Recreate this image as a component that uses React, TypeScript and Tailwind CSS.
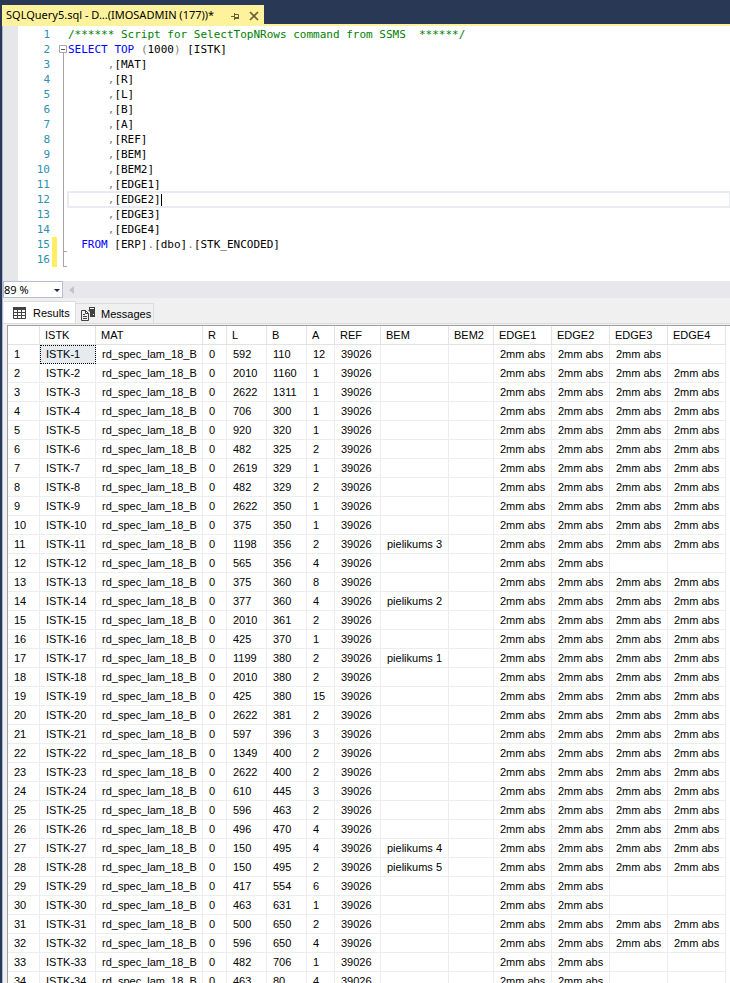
import { useState } from 'react'
import clsx from 'clsx'

type Token = { text: string; className?: string }

const keyword = 'text-[#0000ff]'
const punct = 'text-[#808080]'
const comment = 'text-[#008000]'

const column = (name: string): Token[] => [
  { text: '      ' },
  { text: ',', className: punct },
  { text: `[${name}]` },
]

const codeLines: Token[][] = [
  [{ text: '/****** Script for SelectTopNRows command from SSMS  ******/', className: comment }],
  [
    { text: 'SELECT', className: keyword },
    { text: ' ' },
    { text: 'TOP', className: keyword },
    { text: ' ' },
    { text: '(', className: punct },
    { text: '1000' },
    { text: ')', className: punct },
    { text: ' [ISTK]' },
  ],
  column('MAT'),
  column('R'),
  column('L'),
  column('B'),
  column('A'),
  column('REF'),
  column('BEM'),
  column('BEM2'),
  column('EDGE1'),
  column('EDGE2'),
  column('EDGE3'),
  column('EDGE4'),
  [
    { text: '  ' },
    { text: 'FROM', className: keyword },
    { text: ' [ERP]' },
    { text: '.', className: punct },
    { text: '[dbo]' },
    { text: '.', className: punct },
    { text: '[STK_ENCODED]' },
  ],
  [],
]

const CURRENT_LINE = 12

const columns = [
  { name: 'ISTK', width: 'w-[56px]' },
  { name: 'MAT', width: 'w-[107px]' },
  { name: 'R', width: 'w-[24px]' },
  { name: 'L', width: 'w-[40px]' },
  { name: 'B', width: 'w-[40px]' },
  { name: 'A', width: 'w-[28px]' },
  { name: 'REF', width: 'w-[46px]' },
  { name: 'BEM', width: 'w-[68px]' },
  { name: 'BEM2', width: 'w-[45px]' },
  { name: 'EDGE1', width: 'w-[58px]' },
  { name: 'EDGE2', width: 'w-[58px]' },
  { name: 'EDGE3', width: 'w-[58px]' },
  { name: 'EDGE4', width: 'w-[58px]' },
]

// L, B, A, number of edged sides, BEM
const parts: [number, number, number, number, string?][] = [
  [592, 110, 12, 3],
  [2010, 1160, 1, 4],
  [2622, 1311, 1, 4],
  [706, 300, 1, 4],
  [920, 320, 1, 4],
  [482, 325, 2, 4],
  [2619, 329, 1, 4],
  [482, 329, 2, 4],
  [2622, 350, 1, 4],
  [375, 350, 1, 4],
  [1198, 356, 2, 4, 'pielikums 3'],
  [565, 356, 4, 2],
  [375, 360, 8, 4],
  [377, 360, 4, 4, 'pielikums 2'],
  [2010, 361, 2, 4],
  [425, 370, 1, 4],
  [1199, 380, 2, 4, 'pielikums 1'],
  [2010, 380, 2, 4],
  [425, 380, 15, 4],
  [2622, 381, 2, 4],
  [597, 396, 3, 4],
  [1349, 400, 2, 4],
  [2622, 400, 2, 4],
  [610, 445, 3, 4],
  [596, 463, 2, 4],
  [496, 470, 4, 4],
  [150, 495, 4, 4, 'pielikums 4'],
  [150, 495, 2, 4, 'pielikums 5'],
  [417, 554, 6, 2],
  [463, 631, 1, 2],
  [500, 650, 2, 4],
  [596, 650, 4, 4],
  [482, 706, 1, 2],
  [463, 80, 4, 2],
]

const rows = parts.map(([l, b, a, edges, bem], i) => [
  `ISTK-${i + 1}`,
  'rd_spec_lam_18_B',
  '0',
  String(l),
  String(b),
  String(a),
  '39026',
  bem ?? '',
  '',
  ...[1, 2, 3, 4].map((n) => (n <= edges ? '2mm abs' : '')),
])

function PinIcon() {
  return (
    <svg width="9" height="8" viewBox="0 0 9 8" fill="none" stroke="#6b5f35" aria-hidden="true">
      <path d="M0 4.5h3M3.5 1v7M3.5 2.5h4v3.5" />
      <path d="M3 5h5v2H3z" fill="#6b5f35" stroke="none" />
    </svg>
  )
}

function CloseIcon() {
  return (
    <svg width="10" height="10" viewBox="0 0 10 10" fill="none" stroke="#6b5f35" strokeWidth="1.7" aria-hidden="true">
      <path d="M1 1l8 8M9 1l-8 8" />
    </svg>
  )
}

function GridIcon() {
  return (
    <svg width="13" height="12" viewBox="0 0 13 12" fill="none" stroke="#424242" aria-hidden="true">
      <path d="M0 0h13v3H0z" fill="#424242" stroke="none" />
      <path d="M.5 .5h12v11H.5zM0 5.5h13M0 8.5h13M4.5 3v9M8.5 3v9" />
    </svg>
  )
}

function MessagesIcon() {
  return (
    <svg width="15" height="14" viewBox="0 0 15 14" fill="none" stroke="#424242" aria-hidden="true">
      <path d="M8 0h6v10H9V5L7 3h1z" fill="#424242" stroke="none" />
      <path d="M9 1.5h4" stroke="#f0f0f0" />
      <path d="M12 7h1v1h-1z" fill="#f0f0f0" stroke="none" />
      <path d="M.5 3.5h4l3 3v7h-7zM4.5 3.5v3h3M2 9.5h4M2 11.5h4M2 7.5h2" />
    </svg>
  )
}

function DocumentTab() {
  return (
    <header className="shrink-0 border-b-2 border-[#fff29d] bg-[#293955] pt-[5px]">
      <div className="flex h-[19px] w-[262px] items-center bg-[#fff29d] pt-[2px] pl-1 font-['Noto_Sans','Open_Sans',sans-serif] text-[11px] text-black">
        <span className="w-[225px] whitespace-nowrap">SQLQuery5.sql - D...(IMOSADMIN (177))*</span>
        <button type="button" aria-label="Pin tab" className="mr-[9px]">
          <PinIcon />
        </button>
        <button type="button" aria-label="Close tab">
          <CloseIcon />
        </button>
      </div>
    </header>
  )
}

function Outline({ line }: { line: number }) {
  if (line === 1) return <span className="w-[9px] shrink-0" />
  if (line === 2) {
    return (
      <svg width="9" height="15" viewBox="0 0 9 15" fill="none" stroke="#a5a5a5" className="shrink-0" aria-hidden="true">
        <path d="M.5 3.5h7v7h-7zM4.5 11v4" />
        <path d="M2 7.5h4" stroke="#555" />
      </svg>
    )
  }
  return (
    <svg width="9" height="15" viewBox="0 0 9 15" fill="none" stroke="#a5a5a5" className="shrink-0" aria-hidden="true">
      <path d="M4.5 0v15" />
      {line >= 15 && <path d="M4 14.5h4" />}
    </svg>
  )
}

function Editor() {
  return (
    <section aria-label="Query editor" className="flex h-[255px] shrink-0 bg-white">
      <div className="w-[15px] shrink-0 bg-[#e6e7e8]" />
      <div className="min-w-0 flex-1 pt-px font-['DejaVu_Sans_Mono','Liberation_Mono',monospace] text-[11px] leading-[15px]">
        {codeLines.map((tokens, i) => {
          const line = i + 1
          const current = line === CURRENT_LINE
          return (
            <div key={line} className="flex h-[15px]">
              <span className="w-8 shrink-0 text-right text-[#2b91af]">{line}</span>
              <span className={clsx('mx-[2px] w-[5px] shrink-0', line >= 15 && 'bg-[#ffee62]')} />
              <Outline line={line} />
              <code
                className={clsx(
                  'flex-1 font-[inherit] whitespace-pre text-black',
                  current && 'outline-2 -outline-offset-1 outline-[#eaeaf2]',
                )}
              >
                {tokens.map((token, t) => (
                  <span key={t} className={token.className}>
                    {token.text}
                  </span>
                ))}
                {current && <span className="inline-block h-[13px] w-px bg-black align-middle" />}
              </code>
            </div>
          )
        })}
      </div>
    </section>
  )
}

function ZoomBar() {
  return (
    <div className="flex h-[17px] shrink-0 items-stretch bg-[#e8e8ec]">
      <div className="relative flex">
        <select
          aria-label="Zoom"
          defaultValue="89"
          className="w-[60px] appearance-none border border-[#b4bcd6] bg-white font-['Noto_Sans','Open_Sans',sans-serif] text-[11px] leading-[15px] text-black"
        >
          <option value="89">89 %</option>
          <option value="100">100 %</option>
        </select>
        <svg width="6" height="3" viewBox="0 0 6 3" className="pointer-events-none absolute top-[8px] right-[3px]" aria-hidden="true">
          <path d="M0 0h6L3 3z" fill="#1b293e" />
        </svg>
      </div>
      <button type="button" aria-label="Scroll left" className="px-[6px]">
        <svg width="5" height="8" viewBox="0 0 5 8" aria-hidden="true">
          <path d="M5 0v8L0 4z" fill="#c2c3c9" />
        </svg>
      </button>
    </div>
  )
}

function ResultsGrid() {
  return (
    <div className="min-h-0 flex-1 overflow-hidden border-t border-l border-[#a0a0a0] bg-white">
      <table className="w-[718px] table-fixed border-separate border-spacing-0 text-left whitespace-nowrap">
        <thead>
          <tr className="h-[19px]">
            <th className="w-[32px] border-r border-b border-[#e3e3e3] p-0" />
            {columns.map((col) => (
              <th
                key={col.name}
                scope="col"
                className={clsx(col.width, 'border-r border-b border-[#e3e3e3] p-0 pl-[5px] font-normal')}
              >
                {col.name}
              </th>
            ))}
          </tr>
        </thead>
        <tbody>
          {rows.map((cells, r) => (
            <tr key={r} className="h-[19px]">
              <th scope="row" className="border-r border-b border-[#ededed] p-0 pl-[6px] font-normal">
                {r + 1}
              </th>
              {cells.map((cell, c) => (
                <td
                  key={c}
                  className={clsx(
                    'border-r border-b border-[#ededed] p-0 pl-[6px]',
                    r === 0 && c === 0 && 'bg-[#e6ebef] outline-1 -outline-offset-1 outline-black outline-dotted',
                  )}
                >
                  {cell}
                </td>
              ))}
            </tr>
          ))}
        </tbody>
      </table>
    </div>
  )
}

function ResultsPane() {
  const [tab, setTab] = useState<'results' | 'messages'>('results')

  return (
    <section className="flex min-h-0 flex-1 flex-col bg-[#f0f0f0] font-['Liberation_Sans',Arial,sans-serif] text-[11px] leading-[14px] text-black">
      <div role="tablist" className="flex h-[26px] shrink-0 items-end border-b border-[#dcdcdc] pl-px">
        <button
          type="button"
          role="tab"
          aria-selected={tab === 'results'}
          onClick={() => setTab('results')}
          className="flex h-[22px] w-[72px] items-center gap-[7px] border-t border-r border-[#dcdcdc] bg-white pl-[9px]"
        >
          <GridIcon />
          Results
        </button>
        <button
          type="button"
          role="tab"
          aria-selected={tab === 'messages'}
          onClick={() => setTab('messages')}
          className="flex h-[20px] w-[78px] items-center gap-[5px] border-t border-r border-[#dcdcdc] pl-[5px]"
        >
          <MessagesIcon />
          Messages
        </button>
      </div>
      <div className="flex min-h-0 flex-1 flex-col pt-px pl-1">
        {tab === 'results' ? <ResultsGrid /> : <p className="flex-1 bg-white" />}
      </div>
    </section>
  )
}

export default function App() {
  return (
    <main className="flex h-screen flex-col overflow-hidden border-l-2 border-[#293955] bg-[#f0f0f0]">
      <DocumentTab />
      <div className="flex min-h-0 flex-1 flex-col border-l border-[#a9b6d4]">
        <Editor />
        <ZoomBar />
        <ResultsPane />
      </div>
    </main>
  )
}
